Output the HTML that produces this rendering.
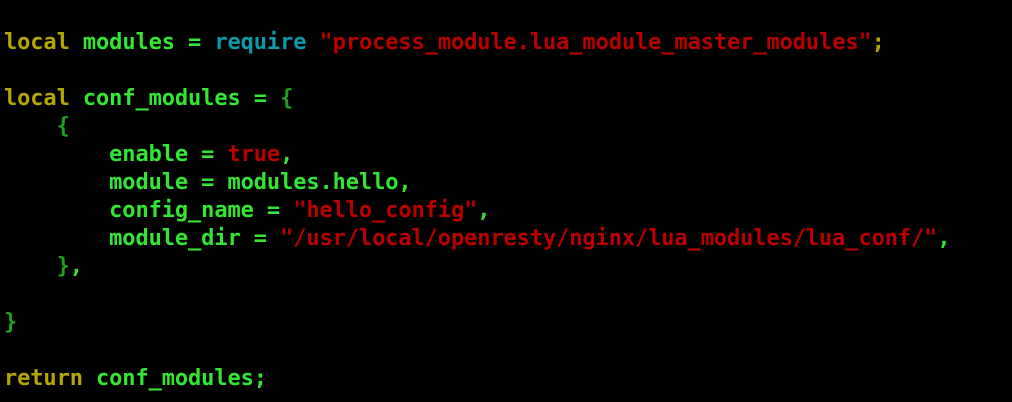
<!DOCTYPE html>
<html><head><style>
html,body{margin:0;padding:0;background:#000;width:1012px;height:402px;overflow:hidden}
pre{margin:0;padding:29px 0 0 4px;font-family:"DejaVu Sans Mono","Liberation Mono",monospace;font-size:22px;font-weight:bold;line-height:28px;color:#33e633;letter-spacing:-0.1px}
.k{color:#b3a800}.r{color:#0b9ba8}.s{color:#b80000}.b{color:#1fa01f}
</style></head><body><pre><span class="k">local</span> modules = <span class="r">require</span> <span class="s">"process_module.lua_module_master_modules"</span><span class="k">;</span>

<span class="k">local</span> conf_modules = <span class="b">{</span>
    <span class="b">{</span>
        enable = <span class="s">true</span>,
        module = modules.hello,
        config_name = <span class="s">"hello_config"</span>,
        module_dir = <span class="s">"/usr/local/openresty/nginx/lua_modules/lua_conf/"</span>,
    <span class="b">}</span>,

<span class="b">}</span>

<span class="k">return</span> conf_modules;</pre></body></html>
